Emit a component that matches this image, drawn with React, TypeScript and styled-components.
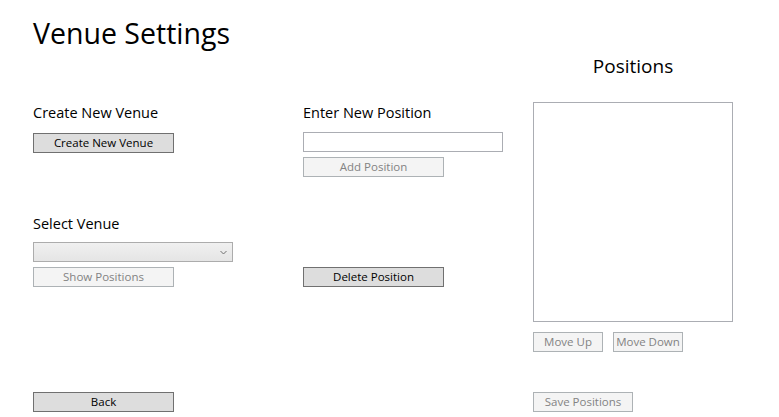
import React from "react";
import styled, { createGlobalStyle, css } from "styled-components";

const Global = createGlobalStyle`
  html, body { margin: 0; padding: 0; background: #ffffff; }
  body { width: 779px; height: 417px; overflow: hidden; font-family: "Open Sans", "Noto Sans", sans-serif; color: #000; }
`;

const Page = styled.div`
  display: grid;
  grid-template-columns: 270px 230px 200px;
  padding-left: 33px;
  height: 417px;
  box-sizing: border-box;
`;

const Column = styled.div`
  display: flex;
  flex-direction: column;
  align-items: flex-start;
`;

const Title = styled.h1`
  margin: 13px 0 0 0;
  font-size: 28.5px;
  font-weight: 400;
  line-height: 40px;
  height: 40px;
  white-space: nowrap;
`;

const Label = styled.div<{ $top: number }>`
  margin-top: ${(p) => p.$top}px;
  font-size: 14.5px;
  line-height: 20px;
  height: 20px;
  white-space: nowrap;
`;

const PanelTitle = styled.div`
  margin-top: 53px;
  width: 200px;
  text-align: center;
  font-size: 19px;
  line-height: 26px;
  height: 26px;
`;

const Button = styled.button<{ $top?: number; $w?: number }>`
  margin-top: ${(p) => p.$top ?? 0}px;
  width: ${(p) => p.$w ?? 141}px;
  height: 20px;
  box-sizing: border-box;
  padding: 0;
  font-family: "Open Sans", "Noto Sans", sans-serif;
  font-size: 11.5px;
  line-height: 18px;
  color: #000;
  background: #dddddd;
  border: 1px solid #707070;
  border-radius: 0;
  white-space: nowrap;
  ${(p) =>
    p.disabled &&
    css`
      color: #838383;
      background: #f4f4f4;
      border-color: #adb2b5;
    `}
`;

const ComboBox = styled.div<{ $top: number }>`
  margin-top: ${(p) => p.$top}px;
  width: 200px;
  height: 20px;
  box-sizing: border-box;
  border: 1px solid #acacac;
  background: linear-gradient(#f0f0f0, #e5e5e5);
  display: flex;
  align-items: center;
  justify-content: flex-end;
  padding-right: 5px;
`;

const TextBox = styled.input<{ $top: number }>`
  margin-top: ${(p) => p.$top}px;
  width: 200px;
  height: 20px;
  box-sizing: border-box;
  border: 1px solid #abadb3;
  outline: none;
  padding: 0 2px;
  font-family: "Open Sans", sans-serif;
  font-size: 12px;
`;

const ListBox = styled.div`
  margin-top: 23px;
  width: 200px;
  height: 220px;
  box-sizing: border-box;
  border: 1px solid #abadb3;
  background: #fff;
`;

const ButtonRow = styled.div<{ $top: number }>`
  margin-top: ${(p) => p.$top}px;
  display: flex;
  gap: 10px;
`;

const Chevron = () => (
  <svg width="7" height="5" viewBox="0 0 7 5">
    <path d="M0.5 1 L3.5 4 L6.5 1" fill="none" stroke="#707070" strokeWidth="1" />
  </svg>
);

export default function App() {
  return (
    <>
      <Global />
      <Page>
        <Column>
          <Title>Venue Settings</Title>
          <Label $top={50}>Create New Venue</Label>
          <Button $top={10}>Create New Venue</Button>
          <Label $top={61}>Select Venue</Label>
          <ComboBox $top={8}>
            <Chevron />
          </ComboBox>
          <Button $top={5} disabled>
            Show Positions
          </Button>
          <Button $top={105}>Back</Button>
        </Column>
        <Column>
          <Label $top={103}>Enter New Position</Label>
          <TextBox $top={9} />
          <Button $top={5} disabled>
            Add Position
          </Button>
          <Button $top={90}>Delete Position</Button>
        </Column>
        <Column>
          <PanelTitle>Positions</PanelTitle>
          <ListBox />
          <ButtonRow $top={10}>
            <Button $w={70} disabled>
              Move Up
            </Button>
            <Button $w={70} disabled>
              Move Down
            </Button>
          </ButtonRow>
          <Button $top={40} $w={100} disabled>
            Save Positions
          </Button>
        </Column>
      </Page>
    </>
  );
}
